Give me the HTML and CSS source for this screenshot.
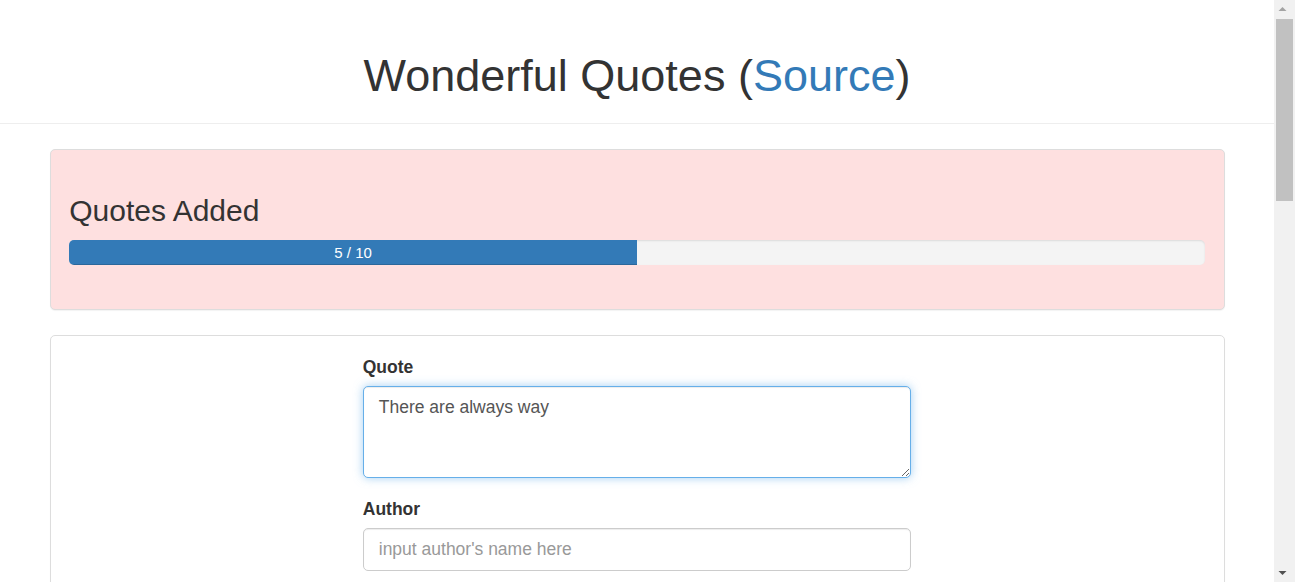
FILE: index.html
```html
<!DOCTYPE html>
<html lang="en">
<head>
<meta charset="utf-8">
<title>Wonderful Quotes</title>
<link rel="stylesheet" href="styles.css">
</head>
<body>
<div class="page">
  <header class="page-header">
    <h1 class="title">Wonderful Quotes (<a class="source-link" href="#">Source</a>)</h1>
  </header>
  <main class="container">
    <section class="panel panel-pink">
      <div class="panel-body">
        <h3 class="counter-title">Quotes Added</h3>
        <div class="progress">
          <div class="progress-bar" style="width: 50%;">5 / 10</div>
        </div>
      </div>
    </section>
    <section class="panel">
      <div class="panel-body">
        <form class="quote-form">
          <div class="form-group">
            <label class="form-label" for="quote">Quote</label>
            <textarea id="quote" class="form-control textarea focused" rows="3">There are always way</textarea>
          </div>
          <div class="form-group">
            <label class="form-label" for="author">Author</label>
            <input id="author" class="form-control" type="text" placeholder="input author's name here">
          </div>
          <div class="form-group">
            <button type="button" class="btn">Add Quote</button>
          </div>
        </form>
      </div>
    </section>
    <section class="quotes">
      <div class="quote-card">Life is what happens when you're busy making other plans.<span class="quote-author">John Lennon</span></div>
      <div class="quote-card">The only way to do great work is to love what you do.<span class="quote-author">Steve Jobs</span></div>
      <div class="quote-card">In the middle of difficulty lies opportunity.<span class="quote-author">Albert Einstein</span></div>
      <div class="quote-card">Stay hungry, stay foolish.<span class="quote-author">Stewart Brand</span></div>
      <div class="quote-card">Simplicity is the ultimate sophistication.<span class="quote-author">Leonardo da Vinci</span></div>
    </section>
    <footer class="footer">Info: Click on a quote to delete it!</footer>
  </main>
</div>
<div class="scrollbar" aria-hidden="true">
  <div class="sb-btn"><svg width="21" height="17" viewBox="0 0 21 17"><polygon points="4.5,11 8.5,7 12.5,11" fill="#a3a3a3"/></svg></div>
  <div class="sb-track"><div class="sb-thumb"></div></div>
  <div class="sb-btn"><svg width="21" height="17" viewBox="0 0 21 17"><polygon points="4.5,6 8.5,10 12.5,6" fill="#505050"/></svg></div>
</div>
</body>
</html>
```
FILE: styles.css
```css
* { box-sizing: border-box; }
html, body { margin: 0; padding: 0; }
body {
  font-family: "Liberation Sans", Arial, Helvetica, sans-serif;
  font-size: 17.5px;
  line-height: 1.42857;
  color: #333;
  background: #fff;
  padding-right: 21px;
}
.page-header {
  padding: 51px 0 22px;
  border-bottom: 1px solid #eee;
  text-align: center;
}
.title {
  margin: 0;
  font-size: 45px;
  font-weight: 400;
  line-height: 1.1;
  color: #333;
}
.source-link { color: #337ab7; text-decoration: none; }
.container {
  width: 1175px;
  margin: 25px auto 0;
}
.panel {
  background: #fff;
  border: 1px solid #ddd;
  border-radius: 5px;
  box-shadow: 0 1px 1px rgba(0,0,0,.05);
  margin-bottom: 25px;
}
.panel-pink { background: #fee0e0; }
.panel-body { padding: 18.75px; }
.counter-title {
  margin: 26px 0 12.5px;
  font-size: 30px;
  font-weight: 400;
  line-height: 1.1;
}
.progress {
  height: 25px;
  margin-bottom: 25px;
  background: #f4f4f4;
  border-radius: 5px;
  overflow: hidden;
  box-shadow: inset 0 1px 2px rgba(0,0,0,.1);
  display: flex;
}
.progress-bar {
  background: #337ab7;
  color: #fff;
  font-size: 15px;
  line-height: 25px;
  text-align: center;
  box-shadow: inset 0 -1px 0 rgba(0,0,0,.15);
}
.quote-form {
  width: 548.5px;
  margin: 0 auto;
  padding-top: 1px;
}
.form-group { margin-bottom: 18.75px; }
.form-label {
  display: block;
  font-weight: 700;
  margin-bottom: 6.25px;
}
.form-control {
  display: block;
  width: 100%;
  height: 42.5px;
  padding: 7.5px 15px;
  font-family: inherit;
  font-size: 17.5px;
  line-height: 1.42857;
  color: #555;
  background: #fff;
  border: 1px solid #ccc;
  border-radius: 5px;
  box-shadow: inset 0 1px 1px rgba(0,0,0,.075);
  outline: none;
}
.form-control::placeholder { color: #999; opacity: 1; }
.textarea {
  height: 92px;
  resize: vertical;
}
.focused {
  border-color: #66afe9;
  box-shadow: inset 0 1px 1px rgba(0,0,0,.075), 0 0 10px rgba(102,175,233,.6);
}
.btn {
  font-family: inherit;
  font-size: 17.5px;
  line-height: 1.42857;
  padding: 7.5px 15px;
  color: #fff;
  background: #337ab7;
  border: 1px solid #2e6da4;
  border-radius: 5px;
}
.quotes {
  display: grid;
  grid-template-columns: repeat(3, 1fr);
  gap: 25px;
  min-height: 900px;
  align-content: start;
}
.quote-card {
  border: 1px solid #ddd;
  border-radius: 5px;
  padding: 18.75px;
  min-height: 200px;
  font-family: "Liberation Serif", serif;
  font-size: 22px;
  text-align: center;
  display: flex;
  flex-direction: column;
  justify-content: center;
}
.quote-author {
  margin-top: 12px;
  font-family: "Liberation Sans", sans-serif;
  font-size: 15px;
  color: #777;
}
.footer {
  padding: 25px 0 40px;
  text-align: center;
  color: #31708f;
}
.scrollbar {
  position: fixed;
  top: 0;
  right: 0;
  width: 21px;
  height: 100vh;
  background: #f1f1f1;
  display: flex;
  flex-direction: column;
}
.sb-btn {
  height: 17px;
  flex: none;
  display: flex;
  justify-content: center;
}
.sb-btn svg { display: block; }
.sb-track {
  flex: 1;
  padding: 2px 2px 0;
}
.sb-thumb {
  height: 182px;
  background: #c1c1c1;
}
```
